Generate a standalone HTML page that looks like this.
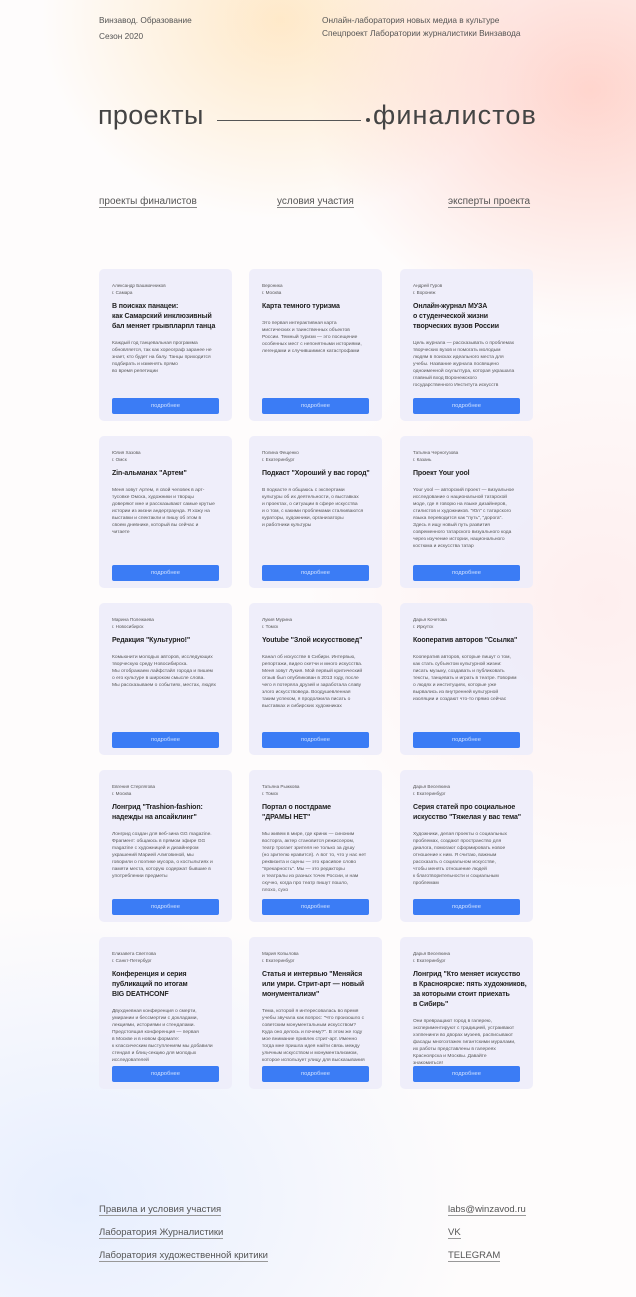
<!DOCTYPE html>
<html><head><meta charset="utf-8"><style>
*{margin:0;padding:0;box-sizing:border-box}
body{width:636px;height:1297px;position:relative;overflow:hidden;font-family:"Liberation Sans","Noto Sans CJK SC",sans-serif;color:#333;
background:
radial-gradient(ellipse 280px 240px at 590px 90px, rgba(255,200,190,0.75), rgba(255,200,190,0) 100%),
radial-gradient(ellipse 240px 200px at 280px 20px, rgba(255,225,180,0.7), rgba(255,225,180,0) 100%),
radial-gradient(ellipse 300px 300px at 600px 600px, rgba(255,225,225,0.5), rgba(255,225,225,0) 100%),
radial-gradient(ellipse 400px 300px at 80px 1200px, rgba(225,235,255,0.8), rgba(225,235,255,0) 100%),
#fefcfc;}
.a{position:absolute}
.hd{font-size:8.3px;color:#555;line-height:16px;white-space:nowrap}
.nav{font-size:10px;color:#555;border-bottom:1px solid #888;line-height:11px;white-space:nowrap}
.card{position:absolute;width:133px;height:152px;border-radius:5px;background:rgba(238,237,250,0.92);padding:13px 13px 0}
.au{font-size:4.6px;line-height:7px;color:#555;white-space:nowrap}
.t{font-size:7px;font-weight:bold;line-height:10px;color:#222;margin-top:6px;white-space:nowrap;letter-spacing:-0.1px}
.d{font-size:4.9px;line-height:7px;color:#555;margin-top:8px;white-space:nowrap}
.b{position:absolute;left:13px;right:13px;bottom:7px;height:16px;background:#3b7cf5;border-radius:2px;color:#cfe0ff;font-size:5.8px;text-align:center;line-height:16px}
.f{font-size:9.5px;color:#555;border-bottom:1px solid #999;line-height:11px;white-space:nowrap}
</style></head><body>
<div class="a hd" style="left:99px;top:12px">Винзавод. Образование<br>Сезон 2020</div>
<div class="a hd" style="left:322px;top:14px;line-height:13px">Онлайн-лаборатория новых медиа в культуре<br>Спецпроект Лаборатории журналистики Винзавода</div>
<div class="a" style="left:98px;top:100px;font-size:27px;color:#444;letter-spacing:0.3px">проекты</div>
<div class="a" style="left:217px;top:120px;width:144px;height:1px;background:#555"></div>
<div class="a" style="left:366px;top:118px;width:4px;height:4px;border-radius:50%;background:#444"></div>
<div class="a" style="left:373px;top:100px;font-size:27px;color:#444;letter-spacing:1.1px">финалистов</div>
<div class="a nav" style="left:99px;top:196px">проекты финалистов</div>
<div class="a nav" style="left:277px;top:196px">условия участия</div>
<div class="a nav" style="left:448px;top:196px">эксперты проекта</div>

<div class="card" style="left:99px;top:269px"><div class="au">Александр Башмачников<br>г. Самара</div><div class="t">В поисках панацеи:<br>как Самарский инклюзивный<br>бал меняет грывпларпл танца</div><div class="d">Каждый год танцевальная программа<br>обновляется, так как хореограф заранее не<br>знает, кто будет на балу. Танцы приходится<br>подбирать и изменять прямо<br>во время репетиции</div><div class="b">подробнее</div></div>
<div class="card" style="left:249px;top:269px"><div class="au">Вероника<br>г. Москва</div><div class="t">Карта темного туризма</div><div class="d">Это первая интерактивная карта<br>мистических и таинственных объектов<br>России. Темный туризм — это посещение<br>особенных мест с непонятными историями,<br>легендами и случившимися катастрофами</div><div class="b">подробнее</div></div>
<div class="card" style="left:400px;top:269px"><div class="au">Андрей Гуров<br>г. Воронеж</div><div class="t">Онлайн-журнал МУЗА<br>о студенческой жизни<br>творческих вузов России</div><div class="d">Цель журнала — рассказывать о проблемах<br>творческих вузов и помогать молодым<br>людям в поисках идеального места для<br>учебы. Название журнала посвящено<br>одноименной скульптура, которая украшала<br>главный вход Воронежского<br>государственного Института искусств</div><div class="b">подробнее</div></div>

<div class="card" style="left:99px;top:436px"><div class="au">Юлия Хазова<br>г. Омск</div><div class="t">Zin-альманах "Артем"</div><div class="d">Меня зовут Артем, я свой человек в арт-<br>тусовке Омска, художники и творцы<br>доверяют мне и рассказывают самые крутые<br>истории из жизни андерграунда. Я хожу на<br>выставки и спектакли и пишу об этом в<br>своем дневнике, который вы сейчас и<br>читаете</div><div class="b">подробнее</div></div>
<div class="card" style="left:249px;top:436px"><div class="au">Полина Фещенко<br>г. Екатеринбург</div><div class="t">Подкаст "Хороший у вас город"</div><div class="d">В подкасте я общаюсь с экспертами<br>культуры об их деятельности, о выставках<br>и проектах, о ситуации в сфере искусства<br>и о том, с какими проблемами сталкиваются<br>кураторы, художники, организаторы<br>и работники культуры</div><div class="b">подробнее</div></div>
<div class="card" style="left:400px;top:436px"><div class="au">Татьяна Черногузова<br>г. Казань</div><div class="t">Проект Your yool</div><div class="d">Your yool — авторский проект — визуальное<br>исследование о национальной татарской<br>моде, где я говорю на языке дизайнеров,<br>стилистов и художников. "Юл" с татарского<br>языка переводится как "путь", "дорога".<br>Здесь я ищу новый путь развития<br>современного татарского визуального кода<br>через изучение истории, национального<br>костюма и искусства татар</div><div class="b">подробнее</div></div>

<div class="card" style="left:99px;top:603px"><div class="au">Марина Полежаева<br>г. Новосибирск</div><div class="t">Редакция "Культурно!"</div><div class="d">Комьюнити молодых авторов, исследующих<br>творческую среду Новосибирска.<br>Мы отображаем лайфстайл города и пишем<br>о его культуре в широком смысле слова.<br>Мы рассказываем о событиях, местах, людях</div><div class="b">подробнее</div></div>
<div class="card" style="left:249px;top:603px"><div class="au">Лукия Мурина<br>г. Томск</div><div class="t">Youtube "Злой искусствовед"</div><div class="d">Канал об искусстве в Сибири. Интервью,<br>репортажи, видео скетчи и много искусства.<br>Меня зовут Лукия. Мой первый критический<br>отзыв был опубликован в 2013 году, после<br>чего я потеряла друзей и заработала славу<br>злого искусствоведа. Воодушевленная<br>таким успехом, я продолжила писать о<br>выставках и сибирских художниках</div><div class="b">подробнее</div></div>
<div class="card" style="left:400px;top:603px"><div class="au">Дарья Кочетова<br>г. Иркутск</div><div class="t">Кооператив авторов "Ссылка"</div><div class="d">Кооператив авторов, которые пишут о том,<br>как стать субъектом культурной жизни:<br>писать музыку, создавать и публиковать<br>тексты, танцевать и играть в театре. Говорим<br>о людях и институциях, которые уже<br>вырвались из внутренней культурной<br>изоляции и создают что-то прямо сейчас</div><div class="b">подробнее</div></div>

<div class="card" style="left:99px;top:770px"><div class="au">Евгения Стерлягова<br>г. Москва</div><div class="t">Лонгрид "Trashion-fashion:<br>надежды на апсайклинг"</div><div class="d">Лонгрид создан для веб-зина GG magazine.<br>Фрагмент: общаюсь в прямом эфире GG<br>magazine с художницей и дизайнером<br>украшений Марией Алиговиной, мы<br>говорили о поэтике мусора, о костыльтиях и<br>памяти места, которую содержат бывшие в<br>употреблении предметы</div><div class="b">подробнее</div></div>
<div class="card" style="left:249px;top:770px"><div class="au">Татьяна Рыжкова<br>г. Томск</div><div class="t">Портал о постдраме<br>"ДРАМЫ НЕТ"</div><div class="d">Мы живем в мире, где кринж — синоним<br>восторга, актер становится режиссером,<br>театр трогает зрителя не только за душу<br>(но зрителю нравится). А вот то, что у нас нет<br>реквизита и сцены — это красивое слово<br>"прекарность". Мы — это редакторы<br>и театралы из разных точек России, и нам<br>скучно, когда про театр пишут пошло,<br>плохо, сухо</div><div class="b">подробнее</div></div>
<div class="card" style="left:400px;top:770px"><div class="au">Дарья Веселкина<br>г. Екатеринбург</div><div class="t">Серия статей про социальное<br>искусство "Тяжелая у вас тема"</div><div class="d">Художники, делая проекты о социальных<br>проблемах, создают пространство для<br>диалога, помогают сформировать новое<br>отношение к ним. Я считаю, важным<br>рассказать о социальном искусстве,<br>чтобы менять отношение людей<br>к благотворительности и социальным<br>проблемам</div><div class="b">подробнее</div></div>

<div class="card" style="left:99px;top:937px"><div class="au">Елизавета Светлова<br>г. Санкт-Петербург</div><div class="t">Конференция и серия<br>публикаций по итогам<br>BIG DEATHCONF</div><div class="d">Двухдневная конференция о смерти,<br>умирании и бессмертии с докладами,<br>лекциями, историями и стендапами.<br>Предстоящая конференция — первая<br>в Москве и в новом формате:<br>к классическим выступлениям мы добавили<br>стендап и блиц-секцию для молодых<br>исследователей</div><div class="b">подробнее</div></div>
<div class="card" style="left:249px;top:937px"><div class="au">Мария Копылова<br>г. Екатеринбург</div><div class="t">Статья и интервью "Меняйся<br>или умри. Стрит-арт — новый<br>монументализм"</div><div class="d">Тема, которой я интересовалась во время<br>учебы звучала как вопрос: "Что произошло с<br>советским монументальным искусством?<br>Куда оно делось и почему?". В этом же году<br>мое внимание привлек стрит-арт. Именно<br>тогда мне пришла идея найти связь между<br>уличным искусством и монументализмом,<br>которое использует улицу для высказывания</div><div class="b">подробнее</div></div>
<div class="card" style="left:400px;top:937px"><div class="au">Дарья Веселкина<br>г. Екатеринбург</div><div class="t">Лонгрид "Кто меняет искусство<br>в Красноярске: пять художников,<br>за которыми стоит приехать<br>в Сибирь"</div><div class="d">Они превращают город в галерею,<br>экспериментируют с традицией, устраивают<br>хэппенинги во дворах музеев, расписывают<br>фасады многоэтажек гигантскими муралами,<br>их работы представлены в галереях<br>Красноярска и Москвы. Давайте<br>знакомиться!</div><div class="b">подробнее</div></div>

<div class="a f" style="left:99px;top:1204px">Правила и условия участия</div>
<div class="a f" style="left:99px;top:1227px">Лаборатория Журналистики</div>
<div class="a f" style="left:99px;top:1250px">Лаборатория художественной критики</div>
<div class="a f" style="left:448px;top:1204px">labs@winzavod.ru</div>
<div class="a f" style="left:448px;top:1227px">VK</div>
<div class="a f" style="left:448px;top:1250px">TELEGRAM</div>
</body></html>
